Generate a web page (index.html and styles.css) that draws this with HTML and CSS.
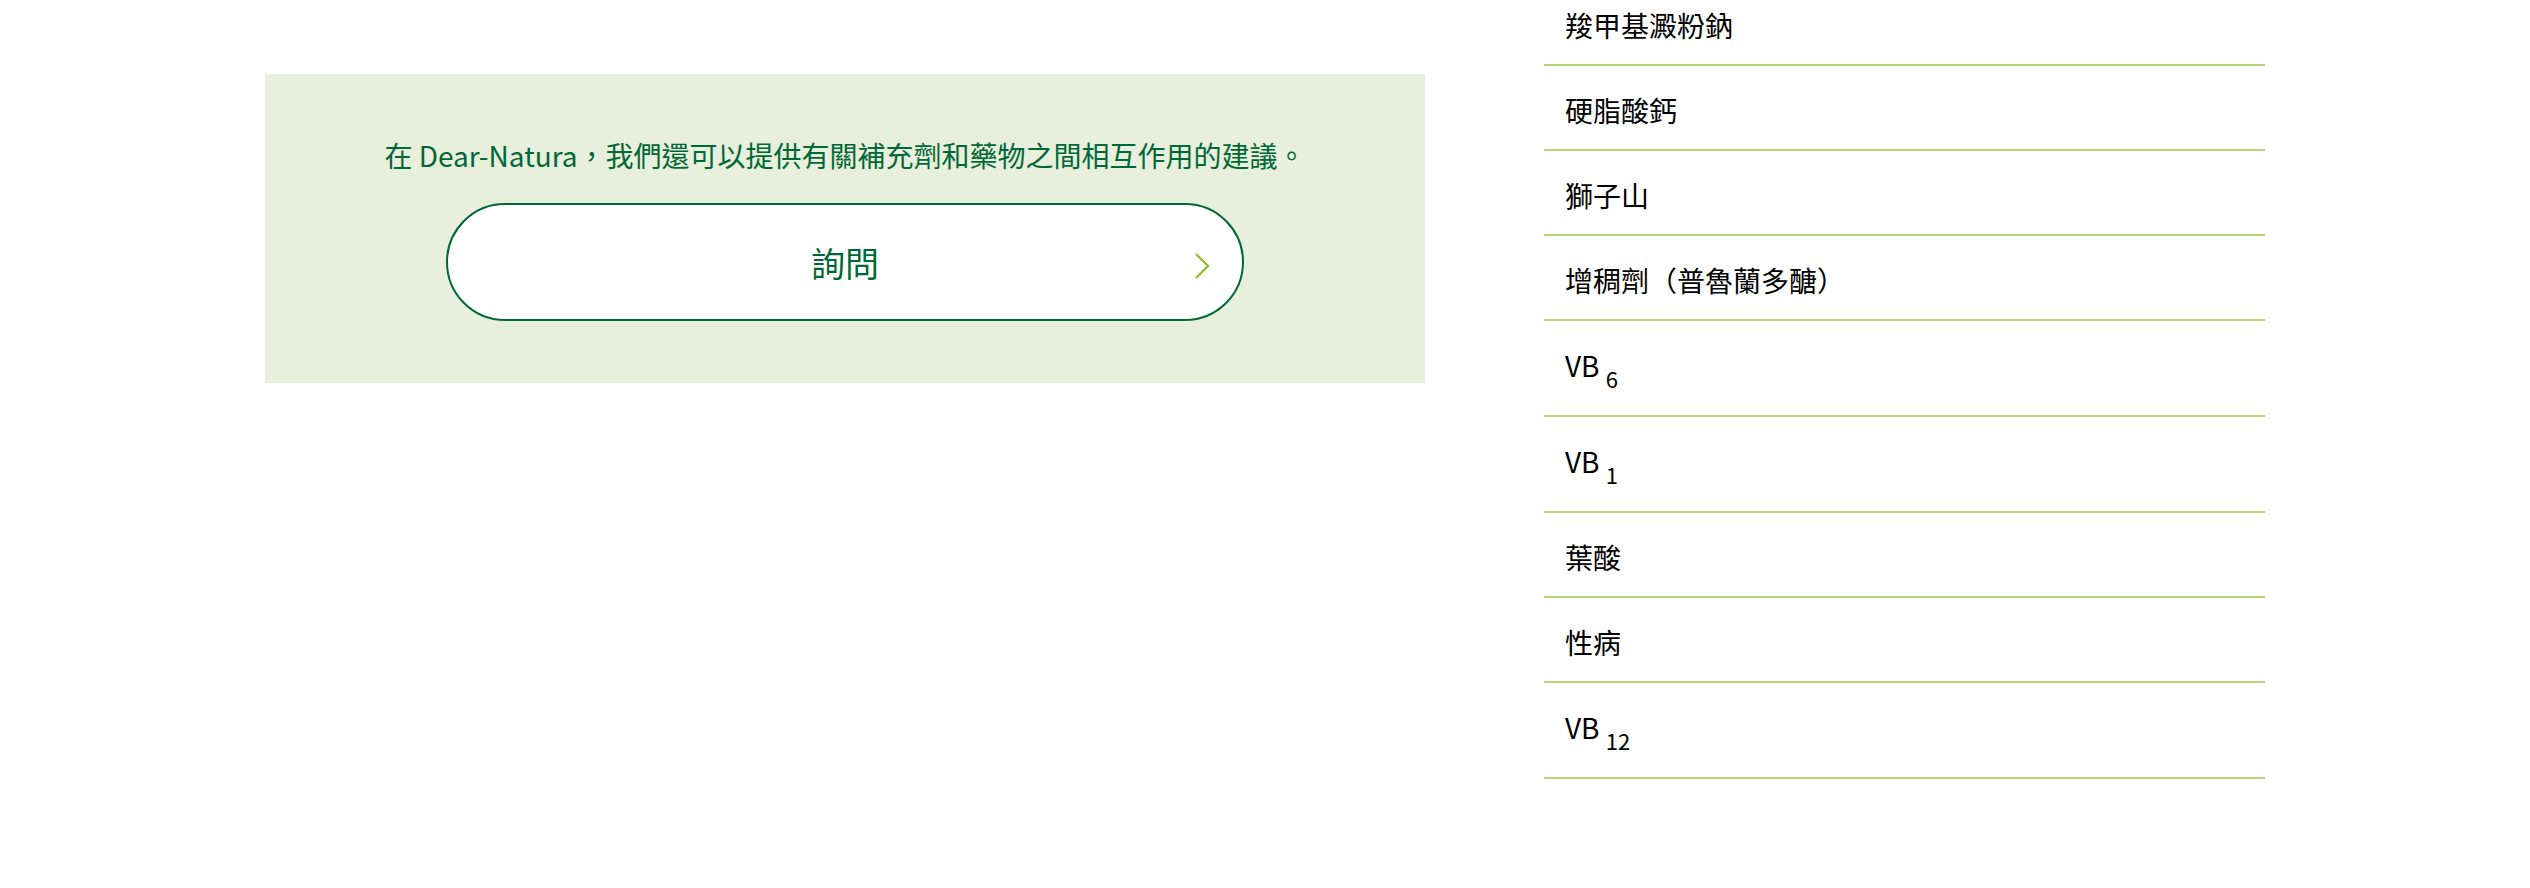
FILE: index.html
```html
<!DOCTYPE html>
<html lang="zh-Hant">
<head>
    <meta charset="UTF-8">
    <meta name="viewport" content="width=device-width, initial-scale=1.0">
    <title>成分</title>
    <link rel="stylesheet" href="styles.css">
</head>
<body>
    <div class="page">
        <div class="main-col">
            <div class="consult-box">
                <p class="consult-text">在 Dear-Natura，我們還可以提供有關補充劑和藥物之間相互作用的建議。</p>
                <a class="consult-btn" href="#">
                    <span>詢問</span>
                    <svg class="chevron" width="16" height="26" viewBox="0 0 16 26">
                        <polyline points="2,1 14,13 2,25" fill="none" stroke="#8dc21f" stroke-width="2.2"/>
                    </svg>
                </a>
            </div>
        </div>

        <ul class="ingredient-list">
            <li>羧甲基澱粉鈉</li>
            <li>硬脂酸鈣</li>
            <li>獅子山</li>
            <li>增稠劑（普魯蘭多醣）</li>
            <li>VB <sub>6</sub></li>
            <li>VB <sub>1</sub></li>
            <li>葉酸</li>
            <li>性病</li>
            <li>VB <sub>12</sub></li>
        </ul>
    </div>
</body>
</html>
```

FILE: styles.css
```css
body {
    margin: 0;
    background-color: #ffffff;
    font-family: "Noto Sans CJK TC", "Noto Sans", sans-serif;
    color: #000;
}
.page {
    width: 2000px;
    margin: 0 auto;
    display: flex;
    align-items: flex-start;
    gap: 119px;
}
.main-col {
    width: 1160px;
    padding-top: 74px;
}
.consult-box {
    background-color: #e8efdc;
    padding: 60px 0 62px;
    display: flex;
    flex-direction: column;
    align-items: center;
}
.consult-text {
    margin: 0 0 27px;
    font-size: 28px;
    line-height: 42px;
    color: #006837;
}
.consult-btn {
    position: relative;
    width: 798px;
    height: 118px;
    box-sizing: border-box;
    border: 2px solid #006837;
    border-radius: 60px;
    background-color: #ffffff;
    display: flex;
    justify-content: center;
    align-items: center;
    color: #006837;
    font-size: 34px;
    text-decoration: none;
}
.chevron {
    position: absolute;
    right: 32px;
    top: 48px;
}
.ingredient-list {
    width: 721px;
    list-style: none;
    margin: -19px 0 0;
    padding: 0;
}
.ingredient-list li {
    padding: 25px 21px 19px;
    font-size: 28px;
    line-height: 39px;
    border-bottom: 2px solid #b8d57a;
}
.ingredient-list sub {
    font-size: 22px;
    line-height: 35px;
    vertical-align: -11px;
}
```
